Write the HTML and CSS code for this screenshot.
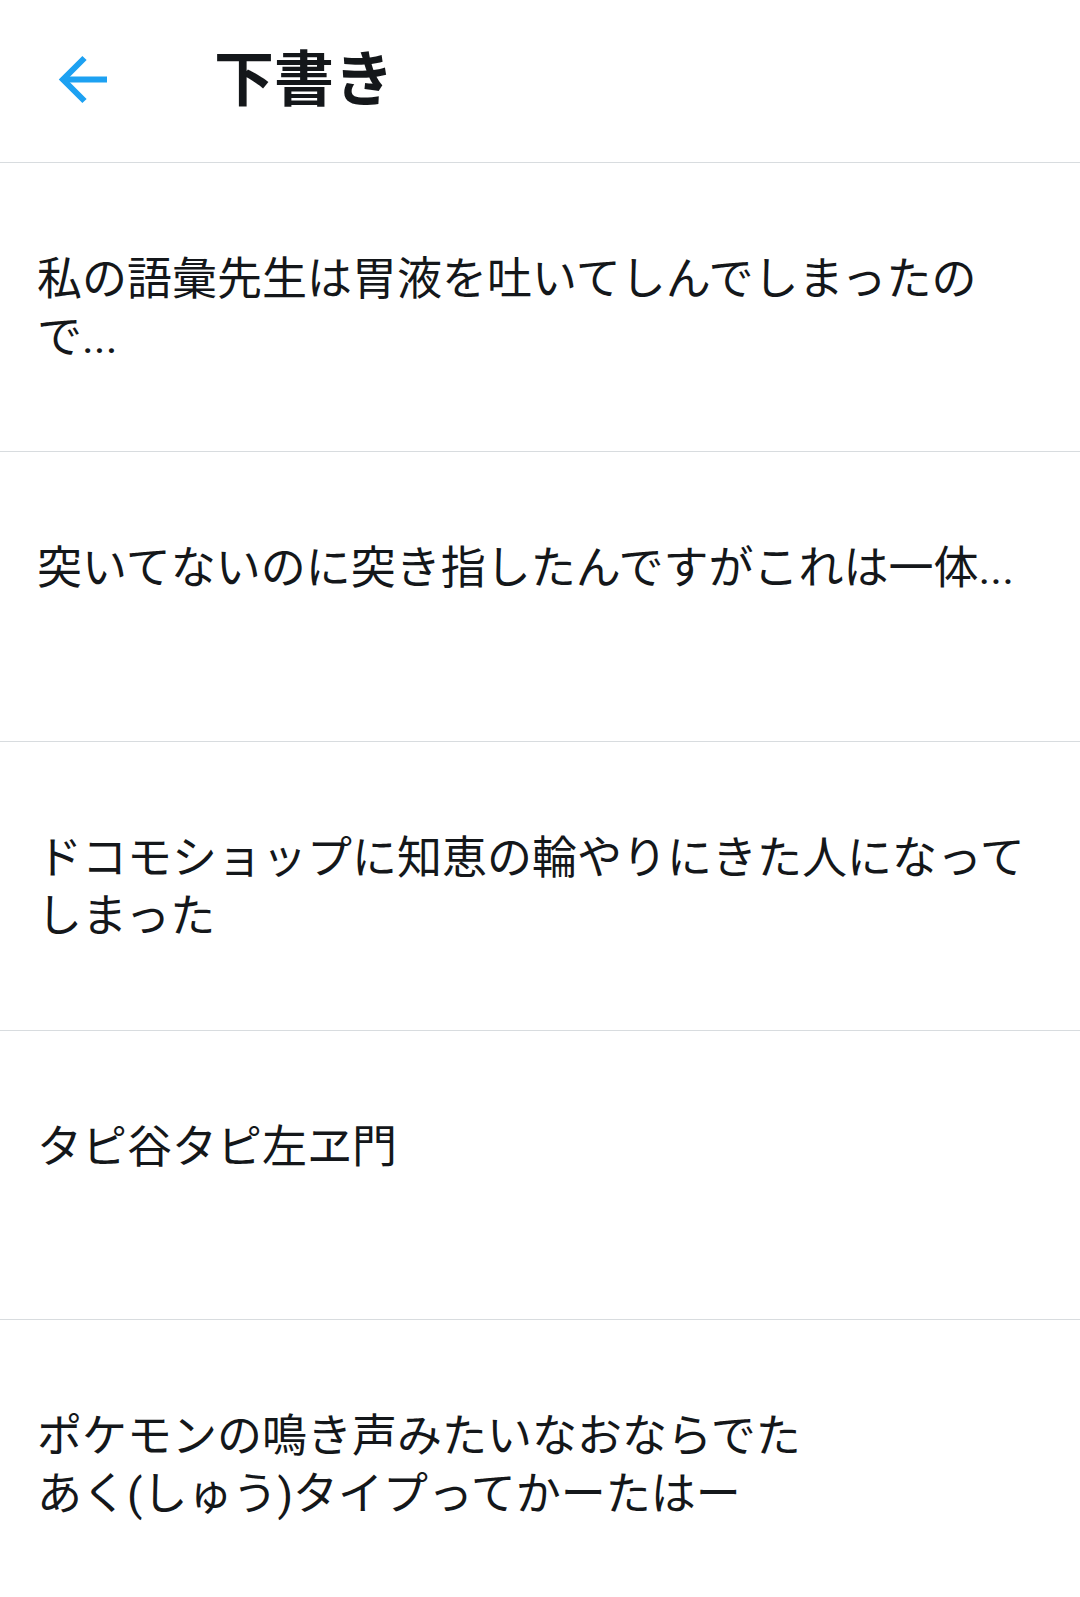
FILE: index.html
```html
<!DOCTYPE html>
<html lang="ja">
<head>
<meta charset="utf-8">
<title>下書き</title>
<link rel="stylesheet" href="styles.css">
</head>
<body>
<header class="app-bar">
  <button class="back" aria-label="戻る">
    <svg width="50" height="50" viewBox="0 0 50 50" aria-hidden="true">
      <path d="M5 24.5 H49" fill="none" stroke="#1DA1F2" stroke-width="6"/>
      <path d="M26.5 3 L5 24.5 L26.5 46" fill="none" stroke="#1DA1F2" stroke-width="6" stroke-linejoin="miter"/>
    </svg>
  </button>
  <h1 class="title">下書き</h1>
</header>
<ul class="drafts">
  <li class="draft"><p class="draft-text">私の語彙先生は胃液を吐いてしんでしまったので...</p></li>
  <li class="draft"><p class="draft-text">突いてないのに突き指したんですがこれは一体...</p></li>
  <li class="draft"><p class="draft-text">ドコモショップに知恵の輪やりにきた人になってしまった</p></li>
  <li class="draft"><p class="draft-text">タピ谷タピ左ヱ門</p></li>
  <li class="draft"><p class="draft-text">ポケモンの鳴き声みたいなおならでた<br>あく(しゅう)タイプってかーたはー</p></li>
</ul>
</body>
</html>
```
FILE: styles.css
```css
* { box-sizing: border-box; }
html, body {
  margin: 0;
  padding: 0;
  background: #ffffff;
}
body {
  font-family: "Roboto", "Noto Sans CJK JP", sans-serif;
  color: #14171A;
  width: 1080px;
}
.app-bar {
  display: flex;
  align-items: center;
  height: 163px;
  border-bottom: 1px solid #D8DCDF;
  padding-left: 55px;
}
.back {
  display: flex;
  align-items: center;
  justify-content: center;
  width: 56px;
  height: 56px;
  padding: 0;
  margin: 0;
  border: 0;
  background: transparent;
  margin-top: -3px;
}
.title {
  margin: 0 0 0 103px;
  font-size: 60px;
  font-weight: 700;
  line-height: 1;
  margin-top: 0;
}
.drafts {
  list-style: none;
  margin: 0;
  padding: 0;
}
.draft {
  height: 289.3px;
  border-bottom: 1px solid #D8DCDF;
  padding: 88px 40px 0 37px;
}
.draft-text {
  margin: 0;
  font-size: 45px;
  line-height: 58px;
  max-width: 1000px;
}
```
